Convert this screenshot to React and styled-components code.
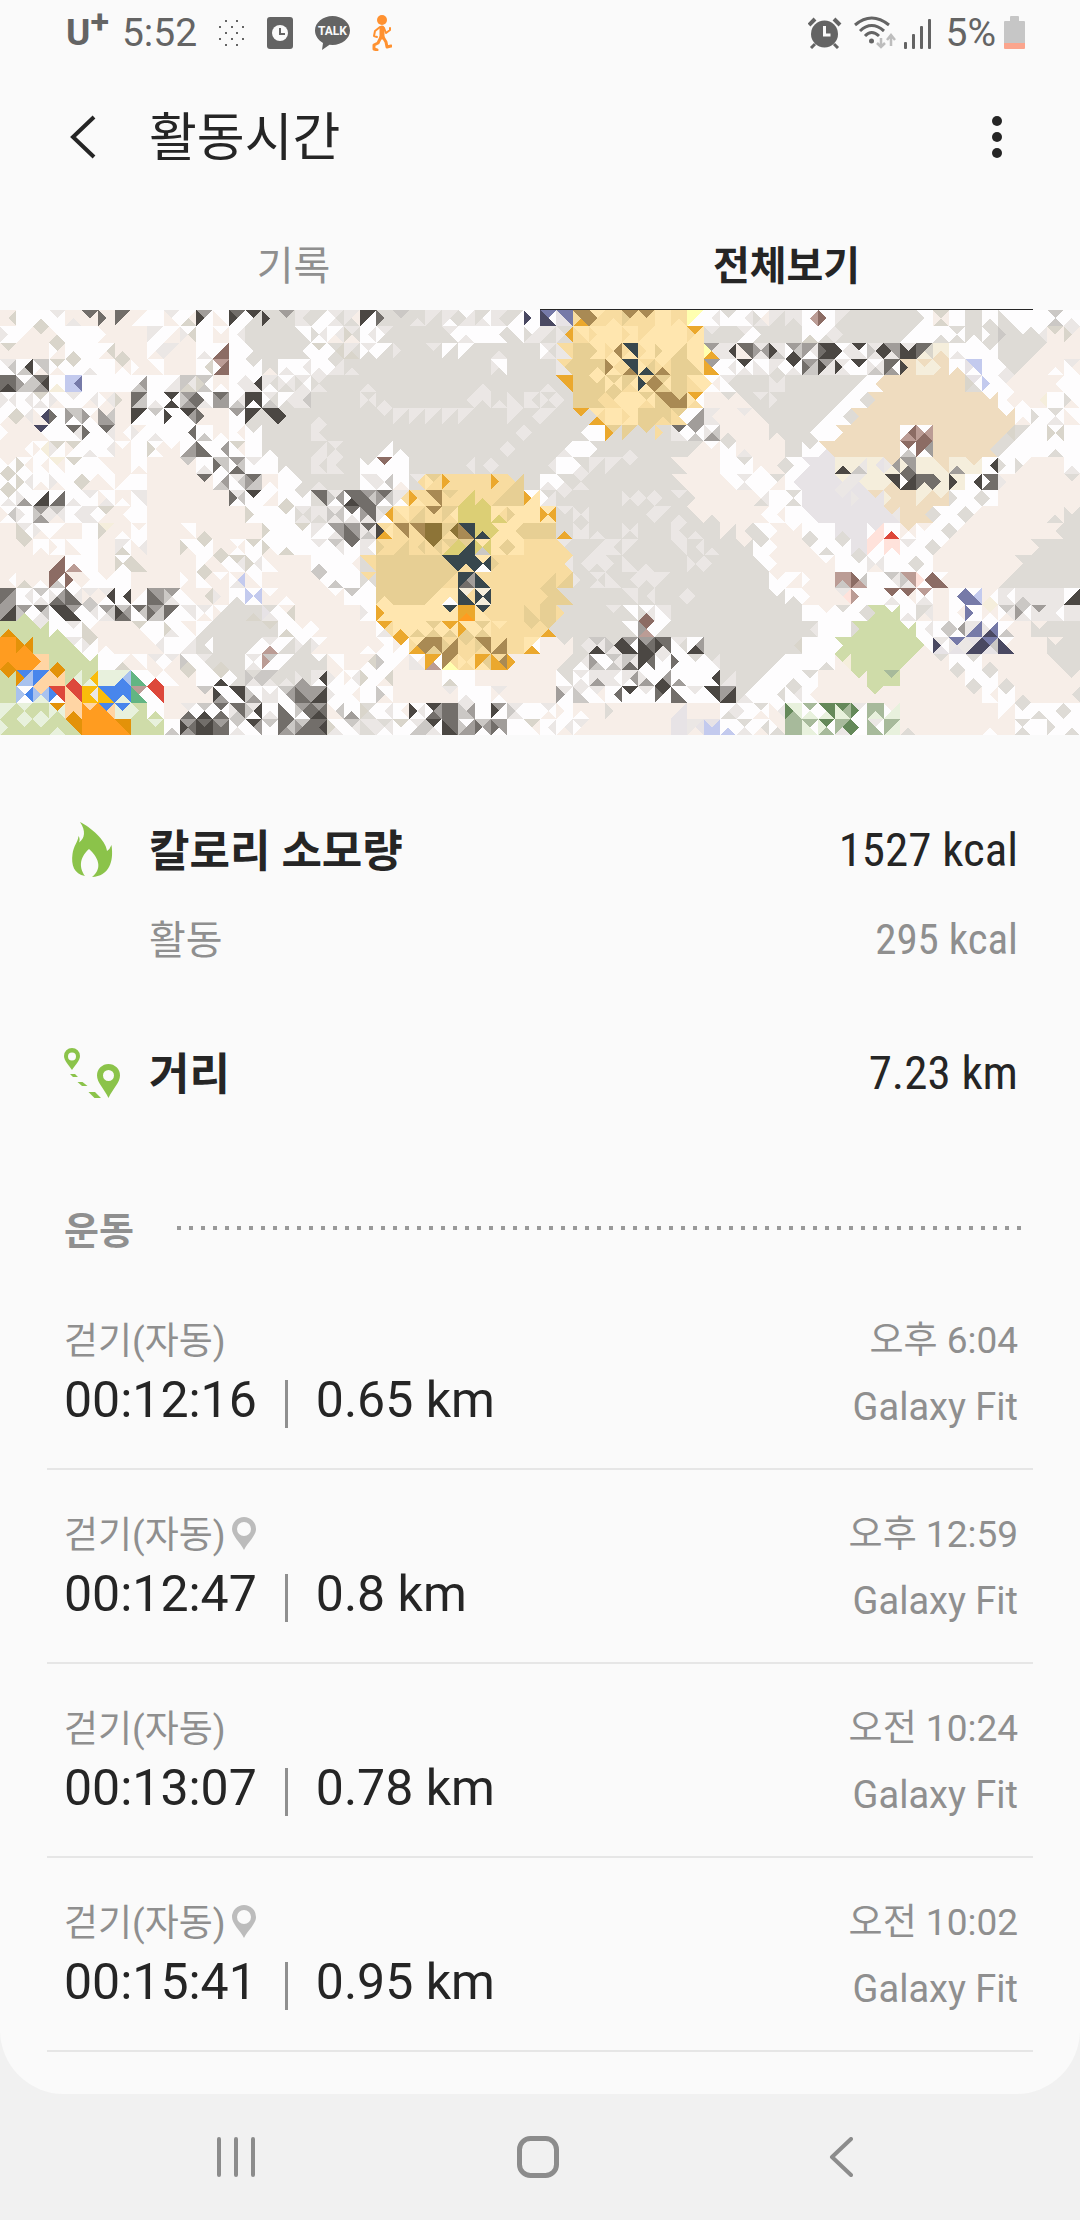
import React from 'react';
import styled, { createGlobalStyle } from 'styled-components';

const GlobalStyle = createGlobalStyle`
  * {
    box-sizing: border-box;
  }

  body {
    margin: 0;
    background: #f1f1f1;
    color: #252525;
    font-family: Roboto, "Noto Sans CJK KR", sans-serif;
  }

  button {
    border: 0;
    padding: 0;
    background: none;
    color: inherit;
    font-family: inherit;
    cursor: pointer;
  }
`;

const Page = styled.div`
  display: flex;
  flex-direction: column;
  min-height: 100vh;
`;

const Screen = styled.div`
  flex: 1;
  background: #fafafa;
  border-radius: 0 0 64px 64px;
`;

const StatusBar = styled.div`
  display: flex;
  justify-content: space-between;
  height: 66px;
  padding: 0 55px 0 66px;
  color: #646464;
  font-size: 39px;
  line-height: 66px;
`;

const StatusGroup = styled.div`
  display: flex;
  align-items: center;
  gap: ${props => props.$gap}px;
`;

const Carrier = styled.span`
  display: flex;
  font-size: 37px;
  font-weight: 700;
  line-height: 72px;
`;

const CarrierPlus = styled.span`
  font-size: 34px;
  line-height: 48px;
`;

const Clock = styled.span`
  margin-left: -9px;
`;

const Header = styled.header`
  display: flex;
  align-items: center;
  height: 142px;
  padding: 0 62px 0 64px;
`;

const HeaderButton = styled.button`
  display: flex;
  align-items: center;
  width: ${props => props.$width}px;
  height: 64px;
`;

const Title = styled.h1`
  flex: 1;
  margin: 0;
  padding-top: 4px;
  font-size: 52px;
  font-weight: 400;
  line-height: 64px;
`;

const Tabs = styled.div`
  display: flex;
  padding: 0 47px;
`;

const Tab = styled.button`
  flex: 1;
  height: 102px;
  padding-top: 8px;
  border-bottom: 1px solid ${props => (props.$active ? '#252525' : 'transparent')};
  color: ${props => (props.$active ? '#252525' : '#8f8f8f')};
  font-size: 40px;
  font-weight: ${props => (props.$active ? 700 : 400)};
`;

const MapImage = styled.svg`
  display: block;
  width: 100%;
  height: 425px;
`;

const Summary = styled.section`
  padding: 83px 62px 98px 64px;
`;

const Stat = styled.div`
  display: flex;
  align-items: center;
  height: ${props => (props.$sub ? 56 : 64)}px;
  margin-top: ${props => props.$space || 0}px;
  color: ${props => (props.$sub ? '#8f8f8f' : '#252525')};
  font-size: ${props => (props.$sub ? 40 : 44)}px;
  line-height: 56px;
`;

const StatIcon = styled.span`
  display: flex;
  width: 85px;
`;

const StatName = styled.span`
  flex: 1;
  padding-top: 4px;
  font-weight: ${props => (props.$sub ? 400 : 700)};
`;

const StatValue = styled.span`
  font-family: "Roboto Condensed", Roboto, sans-serif;
  font-size: ${props => (props.$sub ? 43 : 47)}px;
`;

const SectionTitle = styled.h2`
  display: flex;
  align-items: center;
  gap: 43px;
  margin: 0;
  padding: 0 58px 0 64px;
  color: #8f8f8f;
  font-size: 38px;
  font-weight: 700;
  line-height: 56px;
`;

const DottedRule = styled.span`
  flex: 1;
  height: 4px;
  margin-bottom: 6px;
  background: linear-gradient(90deg, #999 4px, transparent 4px) 0 0 / 12px 4px;
`;

const List = styled.ul`
  margin: 17px 47px 0;
  padding: 0 0 42px;
  list-style: none;
`;

const Exercise = styled.li`
  display: flex;
  justify-content: space-between;
  padding: 40px 15px 35px 17px;
  border-bottom: 2px solid #e6e6e6;
`;

const ExerciseMain = styled.div`
  padding-top: 1px;
`;

const ExerciseName = styled.div`
  display: flex;
  align-items: center;
  gap: 6px;
  color: #8f8f8f;
  font-size: 37px;
  line-height: 50px;

  svg {
    margin-bottom: 6px;
  }
`;

const ExerciseResult = styled.div`
  display: flex;
  align-items: center;
  gap: 28px;
  font-size: 50px;
  line-height: 66px;
`;

const Separator = styled.span`
  width: 3px;
  height: 48px;
  margin-top: 8px;
  background: #8f8f8f;
`;

const ExerciseSource = styled.div`
  display: flex;
  flex-direction: column;
  gap: 16px;
  color: #8f8f8f;
  font-size: 38px;
  line-height: 50px;
  text-align: right;
`;

const ExerciseTime = styled.span`
  font-size: 37px;
`;

const NavBar = styled.nav`
  display: flex;
  height: 126px;
  padding: 0 88px 0 85px;
`;

const NavButton = styled.button`
  display: flex;
  flex: 1;
  align-items: center;
  justify-content: center;
`;

const TILE_COLORS = {
  w: '#fefdfe', p: '#f7eee8', g: '#dedbd6', l: '#ebe7e5', s: '#cbc8c5', e: '#d9d5cb',
  m: '#a19d9a', d: '#726e6a', k: '#4b4743', x: '#f5eedc', a: '#efdcbf', v: '#e7e3e6',
  y: '#ffe6af', f: '#f8dca0', t: '#e7cf94', o: '#eba82d', b: '#a98a54', A: '#8d7437',
  Q: '#ffffb0', n: '#38474d', c: '#dccf75', G: '#cfdca9', L: '#e8f1dd', r: '#8c6c64',
  R: '#bb9c95', X: '#ffe2db', O: '#ff9c20', D: '#e39209', q: '#ffd5a4', B: '#4886ec',
  u: '#a9c2ee', E: '#dd483b', Y: '#fabc0a', K: '#62b583', F: '#65895a', j: '#a7ba9b',
  i: '#c3caee', h: '#767aa8', z: '#4a4962',
};

// One entry per tile row, cut in three blocks of 22 tiles. A tile is one colour,
// or its north, east, south and west triangles; "*n" repeats it.
const TILE_ROWS = [
  ['pepp w wwew lwww pplp dppp pppd dppd pwwp w lwpp wpew mwwk wwpp dwwk kggw gggk mggg lgll gwwg lglw lpgl',
    'kwwk gggd sggg gglg lggl lgwl wllg gwlg lgll gwwg wwwz hwzz hhvv bbof yffb ffyf bfft bfff y ffyf QwwQ wlww',
    'gwww wlww wplg lggl llgl wRww wwwr lggl g*4 wwwg epep w g wwgw wwgg w*2 swsw wwlw'],
  ['wwwl wppw eppp wwep w*2 pppw p*2 lwwl wppw wepl w wppp wlww g*3 wwgg wlwg wlpw lgpe',
    'wlww lggw g*3 lwgg wwlw w wgww wwgg wllg lggl gogl yyff yyyf y yyyf fyyf y*2 oyyf lggg',
    'g lwwg gggw g*2 wwew wlgw gggl g*3 gwwg w wwgw gwgw ggwg gggw gggs wggg wlgg eppp lppe'],
  ['eppp p*2 eppw wwew w wepw ppep p wlpw lppl p wwlw wrrw w gggw g*2 gwgg ewww gegw lgel',
    'lwgw wggw gggl g lggg wggw wggw g gglg g*2 lglw ffll t yyyt ybyf nnyf yyyf yyyt ytty y mloQ',
    'lkll ddpp lmlm llsk mskw mlwm kkkd wlwk kwll lkls mmlk lkkk dexd xxax wwlw w gwww g*2 gppg p*2'],
  ['lsww wksw sspw ewpw ewww wwlw w epwp pppw wwpp p*2 weww Rrrw w gwww ggpg wwlw wlww wwlw gllw gglg',
    'g*8 wwgl g*3 ftll t ttyt yfyb nnbf ftny yfbf t yytt mwoo',
    'wlww kwlw wwll lwgl kwlw mssd mllk lwlk kwww wlsl dwmd aaak axxx aaax wwaw iiwv w gglw gppg p ppwp lpww'],
  ['ddkd wssm dkms wwxw ihii w*3 wmsw w wllw sles swse ppwp wlww wkll lgwl wlgl lwlg lglg g*2',
    'gglg g*6 gglg g*3 gglg oogg t yttt tyty tyft fbyn tytb t yyff wpwy',
    'lgww g*2 glll g*4 gwwg waww a*5 vwge wwwi lpww p*2 pwpp w'],
  ['wlwl wlww ewlw wwpl lwww wlpw plpw pppe dssd wwlw kwkw mdms wwld dmmm wlsw kkwk lgsw wlgw lsll g*3',
    'glgl gglg g*4 glgg llgl gglg ggll lgll glgl gggl t tftt tyff y tyfy bbtt tbbb owfy p',
    'gppp ggpp lggg gggl g*3 gwwg wgww aaag a*6 waaa wpww ppwp pxpp w wwpg'],
  ['wepw wlpe wzpp wwwd sswm wpwm psmm p kwwk swww wwwk kmww pppd p mwww kggk kkgg gggk g gglg g*2',
    'g lggg lggl*5 g*2 lggl glgg lggl g oggg yfog y yyyf t ttft twff wmmw lpll',
    'p lppp ggpp g*3 gwwg wgww aaag a*8 waaa wwpw wwwg gwlw wwpp'],
  ['pppw p zwpp w dlww wwwd dlww pwpp pwwl wwlw w wdww wwsw ppwp wpww gwww g*3 lgll g*2',
    'g*9 glgg gggl g*2 gwgg w tggo tggt tggg gggf dwll mwsw wsml',
    'ppgp p*2 ggpg g gwgg w aaaw a*3 wrRw wRrR a*4 aega gwwg w wewe w'],
  ['p pwpp wxwp ewwl ewwp wwlw wlww wppp w wpwe wppp wmmw wwdd wmww epww w ggwg g*2 gllg lglg g',
    'g gwwg ggwg g*5 glgg gggl g*2 gwlg w gggw g gglg g*3 gppg wppp',
    'gwww pplp p*2 g gwww aavw a*4 rwsw rmwr a*3 agaa gwwg w*2 wwgw w'],
  ['pwew wpwe wpww xpww ewww w ppww p wwpw p*2 sppp wwlw sswd msdw lwww w ggwg g lgll lgll g',
    'gwww rwww w g*3 glgg glgg gggl g*2 glgg w gglw lggl lggl lggg g*2 ppgg p*2',
    'w gwww ppwp pgpp wwwg vvvw v xxkx xlsx xvxx amxl mmdx x aaxx xxmx axxx wkww wwwg wppg p*2 wwlw'],
  ['ewew wlwe wwpw wwpl weww wppe wwpp pwwp w p*3 dppp wmsw lsww dssm ppwp w gggw gglg g*2',
    'llww wswl wwpw lfgg tffy fffo f*2 fffo gttf g wwlw gglw lglg g*5 ppgg p*2',
    'wwpp lwlw w gppw wvww v*2 xllv lxvl x kkax dkkw ddxd xxxd xxxk wkww dddw pppl p*3 gppp'],
  ['ewlw wwml wkkw wddw wwlw lwww wwlp ppwp llww p*5 lswd kwww wppw wwew gwww ddgg lmws ddkw',
    'msdd dswm lfwl ffyo bbff tfff fccf ffcf fttf t wyyo gllw lggg g*3 glgl glgl gggl lggg pppg p',
    'p*2 wlgp w gwgw v*2 lvvv vvvl avvv aaax a xaax xaaa wwwg wgww wwwg p*5'],
  ['wswp wwwl mlms slpl wlww lwll eppw pwpp w p*6 wwwe w ewww lglg llgl lsls dwlw',
    'ddlm gowl yyff fttf bfff tyft c*2 yfcy yyyt y yoyo lggg glgl g*3 glgg lggl gglg ppgg ppgp',
    'p*2 pwpp wpww w vvww v*4 alvv a agaa wwwg wgww wppg p*4 ppgp pggg'],
  ['p lwee wwpl wppw p w xppe ppwp pwww p*2 wwpp ppep p*3 wwwe w ewww lwwl mmlw mmdd',
    'dlsl fyok bbff bbff A tAft nnbb ccnc yyyc ytyy t*2 ggog glll gglg g glgl g*2 lgll gglg g',
    'pggp pgpp wwgg pppw wppp wwgw w vvgv v vXXw wwEw apwp pwww wgww wppg p*5 pgpp g'],
  ['p eppp wwpw wwwp wwpp w p lwel wlpp p*2 wwpe ewww ppep wpwp ewww wwpe wwew w lwww slww dwww',
    'lwll ffft fttf ftff Atff tccf tnnc ycsc ytyy yyyt f*2 lgff g gllg lgll lggl g*2 llgg glgg gglg',
    'g pggg gwww pppw p gwpp wwgw gwww vvgv XwwX XXwX lwww wgww wppg p*5 gggp g*2'],
  ['p*3 prrp wwRw w p wewe ppee p*3 wpew ewpp elww wlwe ppww p*2 wwsw w wpww',
    'ffgg t*4 nntt nnfn ynwn ffft f*3 flff glgg llgl gggl ggll gglg g*2 glgl gggl',
    'g*2 wwgg pppw p*2 wppp w gwww wlpl w wgww wwwg p*5 gggp g*3'],
  ['pwpp ppep ppwp rwsr ppwr wwwp pwww w p*3 pppw epww wppp pilw wwpp p*3 swpp wwsw w',
    'fgwg t*4 tfft nmdn ffnn f*3 fttf fttf gggl lglg ggll glgg llgl lggl g*3',
    'g*3 pwww wppw pppw p RRsR wsRr w slww RRls wrwX wprr p*3 pggp g*4'],
  ['dmmd wlww swlw wmdl wldd lpsp lkwp wkww pwwp mmdd mwls ppww pepp pppl wwgw wiwi wppp ppwp p*2 wppp swww',
    'w ttyt t*2 tyyt yywy xfnn xnxn f*3 tttf ggtt g*3 llgg glgg g glgg gggl g',
    'g*3 wggg wwgw pppw p lXpp wwwR w rwlw rpww Rwlw p whww wihh pwxp lwll llsl l*2 wkkw'],
  ['mkkm mwGs dslw kkww mwkk slww mslw smdk dsww mssd dwwd llww lwpw wggp g ggeg gwlv peww p*4',
    'wwwl yyyo y*3 nyyy ooOo nfyy f*2 fftt t gggf g*2 lggg wwgg wlrg llww g*3',
    'g*5 w pwww gwww wgww GGGg wGGG wwlw glpg p wpww wwwh xpwp slpw swlm mlll lwll l'],
  ['GGDG G lGGG wwGw lwww wpee p*2 ewpp w wwle ppww wggw g*3 eggg wwew pwww pppw p*2',
    'p oflw yyoy yyty tyty oyty yyto tyty yfff f tfff tgof g*4 wwgg rwRm wggw g*3',
    'g*5 glgg w*2 GGGg G*2 wGGG wlww wsww wmws lhhl whzl wpsw p pggg g*2'],
  ['O GDOD G*2 lwGG ewwl ppwp p*2 wlpp w wllw gwgg g*2 gwwg lwRw wggw wggl wppl p*2',
    'ppwp wwwp owwp ybof bbtb fbbt tfff bbft fbbf f ywoy p gppp glgg slkl gkls mwkk mdkk ddlk lgww wmkw g',
    'g*4 gegg w*2 GGGw G*4 wwpG lwvz hlvl vzzl hsvz wpzz p*2 pggg g'],
  ['OODO O qqqO GGDG G wGGG w wpew wwpp lwpp lppw wwes lgww ggeg g lwlw swwR wggw g wggg wwpp p',
    'pewp wwws wppw wpll owRo bfQb fyfy otyo fboo pppo p*2 pggp glwg wwsm slsw slds kdwk lwww wwwd gwww glww',
    'g*3 gwwg w*2 wwgw Gxpp G*3 GppG p gppp wwgw gwww ppgp p*3 ggpp g'],
  ['DGGG BuuD BqqB Dqqq GLEG GYLG L LuBL wwKK pwEw ppww eppp w ewkw gggw gsls sgls gglg ggml lkwl pwwl wlwp',
    'wwwe wepw p*3 wwew w p*5 ggww lwlw llml lwll lmwl wwml wmkw wwmw w wkww',
    'gllg g gwwg w wwgw gwww p*2 Gppp G jGGG p*3 gppp wwgw gwww ppgp p*3 gppp'],
  ['G wBwu quLu EEwB EEqq YlYY BBYY BBLB RwKK EEww p*2 sppp wwmk kkww wwms wlll smww mmdd mkkm wwwl wpww',
    'w wwps p*3 lppp wwlw w lpwp p*3 lwwm lwss lpww wdww kwww lwww kwwd wwdd lwww kkww',
    'mkkm gwlg w wgww glww wpww p*3 Gppp p*5 gppp wpww gwww ppgp p*2 pgpp'],
  ['LGGL LGLG GGLG DLGL qqDq qOOO BqOO BLLL GGGL wwGw p lwdp swkw dwdw ddsl lkws wwlw wwdd mdws mdkd wspp wwmw',
    'gwge wlww wpww wlwk kmdw d lmss w mwwk lwls w lwpw wwwp ppwp p pppg p*3 pvvp p*2',
    'wlgw wwwl gwpw wlpp LLjF jwLw FFLw FjLL lwwF jjLj pLLw p*6 wppw gwww wwgw wgww wwwg'],
  ['GGGL LGGG LGGG GGLG DDGG O*2 DDOO G LGGG wwsw mdmk dkkk mddd swlw kmww swww dsmd sddm dkdd wwle slww',
    'llgg glwl ewww lssw kwls ddkk wmms smwd mmwd w epww wlww wlpw lppw p*5 v lvpl viii',
    'wwiw gwlw wgpw ppgw j jwLL FwjL jFlj wwwF lwjj jLLj ppgp p*4 ppwp p gwgw w wwwg wwgw'],
];

const TRIANGLES = [
  (x, y) => `M${x} ${y}h1l-.5 .5z`,
  (x, y) => `M${x + 1} ${y}v1l-.5 -.5z`,
  (x, y) => `M${x} ${y + 1}h1l-.5 -.5z`,
  (x, y) => `M${x} ${y}v1l.5 -.5z`,
];

// collects all the shapes of a colour in one path
const buildTilePaths = () => {
  const paths = {};
  const add = (color, d) => {
    paths[color] = (paths[color] || '') + d;
  };

  TILE_ROWS.forEach((blocks, y) => {
    blocks.forEach((block, blockIndex) => {
      let x = blockIndex * 22;
      block.split(' ').forEach(item => {
        const [tile, count] = item.split('*');
        for (let i = 0; i < Number(count || 1); i++) {
          if (tile.length === 1) {
            add(tile, `M${x} ${y}h1v1h-1z`);
          } else {
            TRIANGLES.forEach((triangle, side) => add(tile[side], triangle(x, y)));
          }
          x++;
        }
      });
    });
  });

  return paths;
};

const tilePaths = buildTilePaths();

const ActivityMap = () => (
  <MapImage viewBox="0 0 66 26" preserveAspectRatio="xMidYMin slice" shapeRendering="crispEdges" role="img" aria-label="지도">
    {Object.keys(tilePaths).map(color => (
      <path key={color} d={tilePaths[color]} fill={TILE_COLORS[color]} />
    ))}
  </MapImage>
);

const DotsIcon = () => (
  <svg width="26" height="28" viewBox="0 0 26 28" fill="#646464">
    {[[7, 2], [18, 2], [1, 8], [13, 8], [24, 8], [7, 14], [18, 14], [1, 20], [13, 20], [24, 20], [7, 26], [18, 26]].map(([x, y]) => (
      <rect key={`${x}-${y}`} x={x - 1} y={y - 1} width="2" height="2" />
    ))}
  </svg>
);

const TimerCardIcon = () => (
  <svg width="26" height="32" viewBox="0 0 26 32">
    <rect width="26" height="32" rx="3" fill="#646464" />
    <circle cx="13" cy="16" r="8" fill="#fafafa" />
    <path d="M13 11v6h5" fill="none" stroke="#646464" strokeWidth="2" />
  </svg>
);

const TalkIcon = () => (
  <svg width="35" height="34" viewBox="0 0 35 34">
    <path d="M17.500 0C27 0 35 6.500 35 14.500S27 29 17.500 29l-3-.2L7 34l1-7C3 24 0 19.500 0 14.500 0 6.500 8 0 17.500 0z" fill="#646464" />
    <text x="17.500" y="19" fill="#fafafa" fontFamily="Roboto, sans-serif" fontSize="12" fontWeight="700" textAnchor="middle">TALK</text>
  </svg>
);

const WalkerIcon = () => (
  <svg width="20" height="36" viewBox="0 0 20 36" fill="none" stroke="#ff9130" strokeLinecap="round" strokeLinejoin="round">
    <circle cx="10" cy="5" r="5" fill="#ff9130" stroke="none" />
    <path d="M10 13v9" strokeWidth="5" />
    <path d="M8 12l-5 4-1 5 3 1M12 13l2 5 4-3 0-2" strokeWidth="2" />
    <path d="M9 22l-3 6-4 2v4l3 1M11 22l3 5 1 5 4-1" strokeWidth="3" />
  </svg>
);

const AlarmIcon = () => (
  <svg width="38" height="32" viewBox="0 0 38 32" fill="none" stroke="#646464">
    <circle cx="16.500" cy="17" r="13.500" fill="#646464" stroke="none" />
    <path d="M1 8l6-6M26 2l6 6" strokeWidth="4" />
    <path d="M7 27l-4 4M26 27l4 4" strokeWidth="3" />
    <path d="M16.500 9v9h6" stroke="#fafafa" strokeWidth="3" />
  </svg>
);

const WifiIcon = () => (
  <svg width="42" height="34" viewBox="0 0 42 34" fill="none" stroke="#646464" strokeWidth="3">
    <path d="M1 9Q17.500 -5 35 9M6 15Q17.500 4 30 15M11 20Q17.500 13 25 20" />
    <circle cx="17.500" cy="25" r="2.500" fill="#646464" stroke="none" />
    <path d="M27 22v9M23 27l4 4 4-4M37 30v-10M33 24l4-5 4 5" stroke="#bdbdbd" strokeWidth="2.500" />
  </svg>
);

const SignalIcon = () => (
  <svg width="34" height="31" viewBox="0 0 34 31" fill="#646464">
    <rect x="0" y="24" width="3" height="7" rx="1" />
    <rect x="8" y="16" width="3" height="15" rx="1" />
    <rect x="16" y="8" width="3" height="23" rx="1" />
    <rect x="24" y="1" width="3" height="30" rx="1" />
  </svg>
);

const BatteryIcon = () => (
  <svg width="21" height="34" viewBox="0 0 21 34">
    <path d="M6 1q0-1 1-1h7q1 0 1 1v4h5q1 0 1 1v22H0V6q0-1 1-1h5z" fill="#c6c6c6" />
    <path d="M0 27h21v5q0 1-1 1H1q-1 0-1-1z" fill="#fba58d" />
  </svg>
);

const BackIcon = () => (
  <svg width="40" height="44" viewBox="0 0 40 44" fill="none" stroke="#252525" strokeWidth="4">
    <path d="M30 2L9 22l21 20" />
  </svg>
);

const MoreIcon = () => (
  <svg width="10" height="44" viewBox="0 0 10 44" fill="#252525">
    <circle cx="5" cy="6" r="5" />
    <circle cx="5" cy="22" r="5" />
    <circle cx="5" cy="38" r="5" />
  </svg>
);

const FlameIcon = () => (
  <svg width="56" height="56" viewBox="-8 0 56 56" fill="#8bc34a">
    <path d="M8 0C18 5 34 18 35 29q3-2 4.500-6C42 40 37 54 20 55c9-7 9-17-3-28C6 37 8 47 13 54 2 52-1 43 .500 32 1.500 24 6 20 6.500 14q2 3 .5 6.500C13 16 14 9 8 0z" />
  </svg>
);

const RouteIcon = () => (
  <svg width="57" height="51" viewBox="0 0 57 51" fill="#8bc34a">
    <path fillRule="evenodd" d="M8 0a8 8 0 0 1 8 8c0 5-5 9-8 14C5 17 0 13 0 8a8 8 0 0 1 8-8zm0 4.500a4 4 0 1 0 0 8 4 4 0 0 0 0-8z" />
    <path fillRule="evenodd" d="M44.500 16A11.500 11.500 0 0 1 56 27.500c0 7-7 13-11.500 22.500C40 40.500 33 34.500 33 27.500A11.500 11.500 0 0 1 44.500 16zm0 6a5.500 5.500 0 1 0 0 11 5.500 5.500 0 0 0 0-11z" />
    <path d="M6 26h5l3 3H9zM13.500 34h5l5 4H18zM24.500 44H31l6 6h-6.500z" />
  </svg>
);

const PinIcon = () => (
  <svg width="24" height="33" viewBox="0 0 24 33">
    <path fill="#bcbcbc" fillRule="evenodd" d="M12 0a12 12 0 0 1 12 12c0 7-8 13-12 21C8 25 0 19 0 12A12 12 0 0 1 12 0zm0 5a7 7 0 1 0 0 14 7 7 0 0 0 0-14z" />
  </svg>
);

const RecentsIcon = () => (
  <svg width="38" height="40" viewBox="0 0 38 40" stroke="#8c8c8c" strokeWidth="4" strokeLinecap="round">
    <path d="M2 2v36M19 2v36M36 2v36" />
  </svg>
);

const HomeIcon = () => (
  <svg width="42" height="42" viewBox="0 0 42 42" fill="none" stroke="#8c8c8c" strokeWidth="5">
    <rect x="2.500" y="2.500" width="37" height="37" rx="11" />
  </svg>
);

const NavBackIcon = () => (
  <svg width="24" height="40" viewBox="0 0 24 40" fill="none" stroke="#8c8c8c" strokeWidth="4" strokeLinecap="round" strokeLinejoin="round">
    <path d="M22 2L3 20l19 18" />
  </svg>
);

const exercises = [
  { duration: '00:12:16', distance: '0.65 km', time: '오후 6:04' },
  { duration: '00:12:47', distance: '0.8 km', time: '오후 12:59', located: true },
  { duration: '00:13:07', distance: '0.78 km', time: '오전 10:24' },
  { duration: '00:15:41', distance: '0.95 km', time: '오전 10:02', located: true },
];

const App = () => (
  <Page>
    <GlobalStyle />
    <Screen>
      <StatusBar>
        <StatusGroup $gap={22}>
          <Carrier>U<CarrierPlus>+</CarrierPlus></Carrier>
          <Clock>5:52</Clock>
          <DotsIcon />
          <TimerCardIcon />
          <TalkIcon />
          <WalkerIcon />
        </StatusGroup>
        <StatusGroup $gap={8}>
          <AlarmIcon />
          <WifiIcon />
          <SignalIcon />
          <span>5%</span>
          <BatteryIcon />
        </StatusGroup>
      </StatusBar>

      <Header>
        <HeaderButton $width={85} aria-label="뒤로"><BackIcon /></HeaderButton>
        <Title>활동시간</Title>
        <HeaderButton $width={26} aria-label="더보기"><MoreIcon /></HeaderButton>
      </Header>

      <Tabs role="tablist">
        <Tab role="tab" aria-selected="false">기록</Tab>
        <Tab role="tab" aria-selected="true" $active>전체보기</Tab>
      </Tabs>

      <ActivityMap />

      <Summary>
        <Stat>
          <StatIcon><FlameIcon /></StatIcon>
          <StatName>칼로리 소모량</StatName>
          <StatValue>1527 kcal</StatValue>
        </Stat>
        <Stat $sub $space={29}>
          <StatIcon />
          <StatName $sub>활동</StatName>
          <StatValue $sub>295 kcal</StatValue>
        </Stat>
        <Stat $space={74}>
          <StatIcon><RouteIcon /></StatIcon>
          <StatName>거리</StatName>
          <StatValue>7.23 km</StatValue>
        </Stat>
      </Summary>

      <SectionTitle>운동<DottedRule /></SectionTitle>
      <List>
        {exercises.map(exercise => (
          <Exercise key={exercise.duration}>
            <ExerciseMain>
              <ExerciseName>
                걷기(자동)
                {exercise.located && <PinIcon />}
              </ExerciseName>
              <ExerciseResult>
                <span>{exercise.duration}</span>
                <Separator />
                <span>{exercise.distance}</span>
              </ExerciseResult>
            </ExerciseMain>
            <ExerciseSource>
              <ExerciseTime>{exercise.time}</ExerciseTime>
              <span>Galaxy Fit</span>
            </ExerciseSource>
          </Exercise>
        ))}
      </List>
    </Screen>

    <NavBar>
      <NavButton aria-label="최근 앱"><RecentsIcon /></NavButton>
      <NavButton aria-label="홈"><HomeIcon /></NavButton>
      <NavButton aria-label="뒤로 가기"><NavBackIcon /></NavButton>
    </NavBar>
  </Page>
);

export default App;
